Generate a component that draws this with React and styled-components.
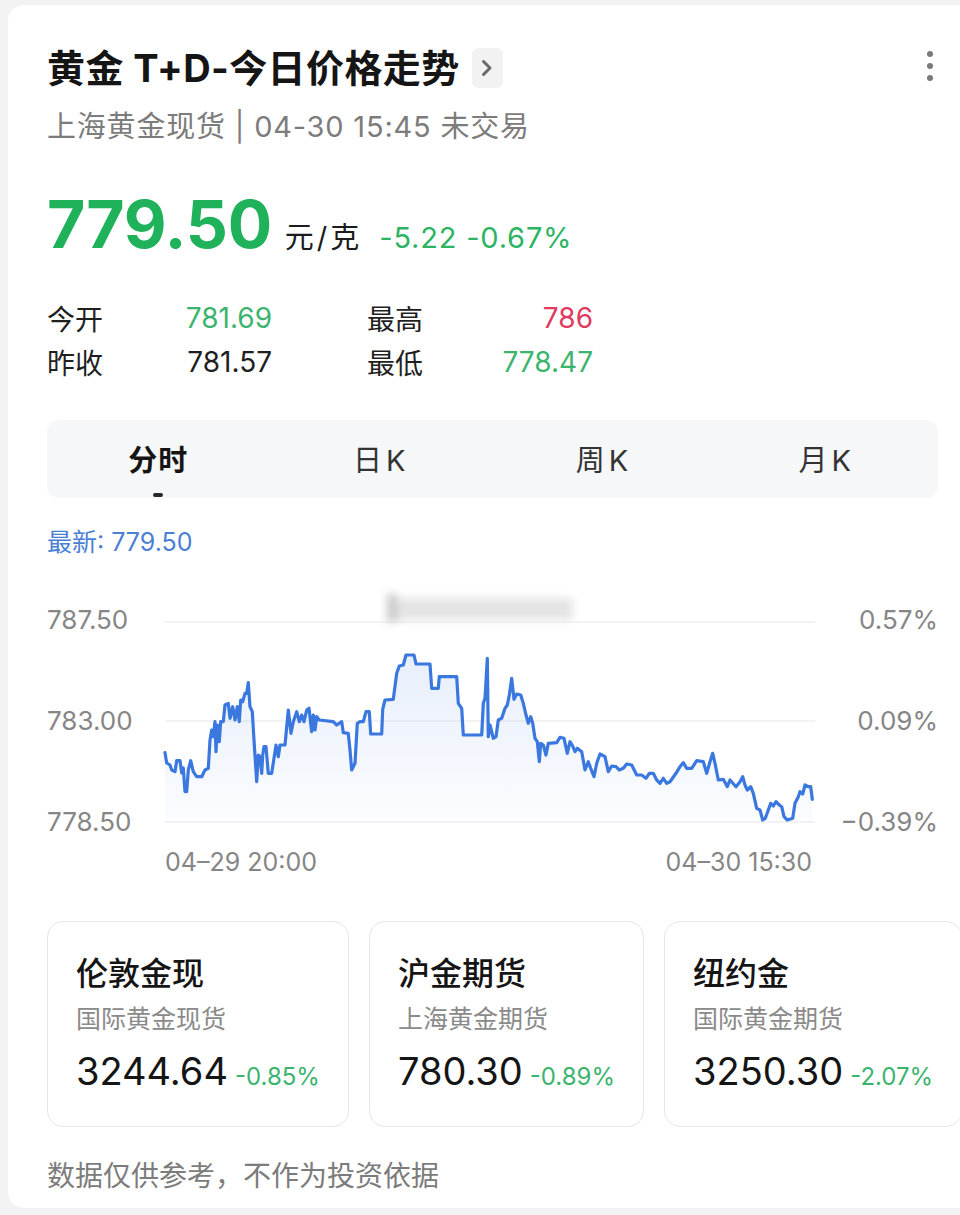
import React from "react";
import styled, { createGlobalStyle } from "styled-components";

const GlobalStyle = createGlobalStyle`
  html, body { margin: 0; padding: 0; }
  body {
    background: #f3f3f3;
    font-family: Inter, "Noto Sans CJK SC", sans-serif;
    color: #1a1a1a;
    overflow: hidden;
    width: 960px;
    height: 1215px;
  }
  * { box-sizing: border-box; }
`;

const Sheet = styled.div`
  margin: 5px -24px 0 8px;
  background: #ffffff;
  border-radius: 16px;
  padding: 41px 46px 14px 39px;
  height: 1203px;
`;

const Header = styled.div`
  display: flex;
  align-items: center;
  justify-content: space-between;
`;

const TitleGroup = styled.div`
  display: flex;
  align-items: center;
  gap: 12px;
`;

const Title = styled.h1`
  margin: 0;
  font-size: 38px;
  line-height: 44px;
  font-weight: 700;
  color: #151515;
  letter-spacing: 0.4px;
`;

const ChevronBox = styled.div`
  width: 31px;
  height: 40px;
  border-radius: 6px;
  background: #f2f2f2;
  display: flex;
  align-items: center;
  justify-content: center;
`;

const MoreDots = styled.div`
  display: flex;
  flex-direction: column;
  gap: 6px;
  margin-right: 5px;
  margin-top: -4px;
`;

const Dot = styled.span`
  width: 6px;
  height: 6px;
  border-radius: 50%;
  background: #7a7a7a;
`;

const Subtitle = styled.div`
  margin-top: 19px;
  font-size: 29px;
  line-height: 36px;
  color: #7c7c7c;
  letter-spacing: 0.8px;
`;

const PriceRow = styled.div`
  margin-top: 46px;
  display: flex;
  align-items: baseline;
`;

const BigPrice = styled.span`
  font-size: 66px;
  line-height: 66px;
  font-weight: 700;
  color: #20b25a;
  letter-spacing: -0.3px;
`;

const Unit = styled.span`
  margin-left: 13px;
  font-size: 29px;
  color: #1c1c1c;
  letter-spacing: 3px;
`;

const Change = styled.span`
  margin-left: 17px;
  font-size: 29px;
  color: #2cb463;
  letter-spacing: 0.8px;
`;

const StatGrid = styled.div`
  margin-top: 39px;
  display: grid;
  grid-template-columns: 225px 226px;
  column-gap: 95px;
  grid-auto-rows: 44px;
`;

const StatPair = styled.div`
  display: flex;
  align-items: center;
  justify-content: space-between;
  font-size: 28px;
`;

const StatLabel = styled.span`
  color: #1f1f1f;
`;

const StatValue = styled.span`
  color: ${(p) => p.$color || "#1f1f1f"};
`;

const TabBar = styled.div`
  margin-top: 36px;
  height: 78px;
  border-radius: 12px;
  background: #f6f7f8;
  display: grid;
  grid-template-columns: repeat(4, 1fr);
`;

const Tab = styled.div`
  display: flex;
  flex-direction: column;
  align-items: center;
  padding-top: 21px;
`;

const TabText = styled.span`
  font-size: 29px;
  line-height: 40px;
  font-weight: ${(p) => (p.$active ? 700 : 400)};
  color: ${(p) => (p.$active ? "#151515" : "#333333")};
  letter-spacing: ${(p) => (p.$active ? "1px" : "4px")};
`;

const TabIndicator = styled.span`
  margin-top: 12px;
  width: 10px;
  height: 4px;
  border-radius: 2px;
  background: ${(p) => (p.$active ? "#2a2a2a" : "transparent")};
`;

const Latest = styled.div`
  margin-top: 28px;
  font-size: 25px;
  line-height: 32px;
  color: #4a7fd4;
`;

const ChartGrid = styled.div`
  margin-top: 32px;
  display: grid;
  grid-template-columns: 118px 650px 1fr;
`;

const AxisColumn = styled.div`
  padding-top: 10px;
  height: 252px;
  display: flex;
  flex-direction: column;
  justify-content: space-between;
  align-items: ${(p) => (p.$right ? "flex-end" : "flex-start")};
`;

const AxisLabel = styled.span`
  font-size: 26px;
  line-height: 40px;
  color: #868686;
`;

const ChartSvg = styled.svg`
  display: block;
  width: 650px;
  height: 252px;
  overflow: visible;
`;

const TimeRow = styled.div`
  margin: 5px 0 0 118px;
  width: 647px;
  display: flex;
  justify-content: space-between;
  font-size: 25px;
  line-height: 30px;
  color: #868686;
`;

const CardRow = styled.div`
  margin-top: 44px;
  display: flex;
  gap: 20px;
  margin-right: -80px;
`;

const MarketCard = styled.div`
  flex: none;
  height: 206px;
  padding: 32px 28px 0 28px;
  border: 1.5px solid #e6e6e6;
  border-radius: 16px;
  background: #fff;
`;

const CardTitle = styled.div`
  font-size: 32px;
  line-height: 40px;
  font-weight: 500;
  color: #151515;
`;

const CardSub = styled.div`
  margin-top: 9px;
  font-size: 25px;
  line-height: 32px;
  color: #8a8a8a;
`;

const CardValueRow = styled.div`
  margin-top: 13px;
  display: flex;
  align-items: baseline;
  gap: 7px;
`;

const CardValue = styled.span`
  font-size: 38px;
  line-height: 46px;
  color: #151515;
`;

const CardChange = styled.span`
  font-size: 24px;
  color: #3cb46e;
`;

const Footer = styled.div`
  margin-top: 31px;
  font-size: 28px;
  line-height: 36px;
  color: #7c7c7c;
`;

const raw = [
  [165,752.7],[166.7,763],[170,765],[171.7,770],[175,771.7],[176.7,760.7],[180,760.7],[181.7,773],
  [183.3,768],[185,791.7],[186.7,791.7],[188.3,770],[190.7,760.7],[193.3,771.7],[196.7,776.7],
  [201.7,776.7],[205,770],[208.3,768.3],[210,740],[211.7,730],[213.3,736.7],[215,721.7],[216,751.7],
  [217.3,725],[219.3,741.7],[220.7,721.7],[223.3,721.7],[225,705],[228.3,703.3],[230,718.3],
  [232.7,706.7],[235,720],[237.3,706.7],[239.3,721.7],[240.7,700],[242.7,701.7],[245,693.3],
  [246.7,693.3],[248.3,682.7],[250,706.7],[252.3,711.7],[254,740],[256.7,781.7],[258.3,755],
  [260,756.7],[261.7,773.3],[262.7,755],[264,746.7],[266,746.7],[268.3,773.3],[271.7,773.3],
  [274,758.3],[276,745],[278.3,756.7],[280,745],[285,745],[288.3,710],[291,733.3],[293.3,721.7],
  [296.7,711.7],[299.3,721.7],[301.7,715],[304,721.7],[306.7,710],[309,708.3],[311.7,731.7],
  [313.3,715],[315,730],[316.7,716.7],[319.3,720],[333.3,721.7],[336.7,725],[341.7,721.7],
  [343.3,732.7],[348.3,733.3],[350,750],[351.7,770],[355,763.3],[357.3,723.3],[360,721.7],
  [363.3,721.7],[366,711.7],[369.3,711.7],[370.7,734],[381.7,734],[382.7,709.3],[385,700],
  [393.3,699.3],[396.7,673.3],[399.3,666],[403.3,665],[406,655],[414,655],[416,664],[430,664],
  [431.7,688.3],[438.3,688.3],[439.3,676.7],[456.7,676.7],[458.3,703.3],[461.7,708.3],[463.3,735],
  [481.7,735],[483.3,703.3],[485,698.3],[487.3,658.3],[488.3,736.7],[490,725],[493.3,738.3],
  [496,736.7],[498.3,720],[501.7,718.3],[505,708.3],[507.3,705],[509.3,695],[511.7,678.3],
  [514,699.3],[516.7,694],[520.7,695],[523.3,703.3],[526,715],[528.3,723.3],[530.7,716.7],
  [532.7,723.3],[535,738.3],[537.3,741.7],[539.3,761.7],[540.7,743.3],[543.3,745],[546,755],
  [548.3,743.3],[556.7,742.7],[560,737.3],[564,738.3],[567.3,753.3],[570,741.7],[572.7,746],
  [575,751.7],[577.3,748.3],[581.7,751.7],[585,770],[588.3,761.7],[590.7,768.3],[594,776.7],
  [596.7,763.3],[600,754],[605,756.7],[608.3,771.7],[611.7,766],[616,766.7],[619.3,770],
  [623.3,768.3],[626.7,764],[631.7,765],[636.7,775],[641.7,775],[646,778.3],[649.3,773.3],
  [653.3,773.3],[656.7,780],[660,783.3],[663.3,778.3],[666.7,783.3],[670,781.7],[676,773.3],
  [680,766.7],[683.3,762.7],[686.7,768.3],[691.7,768.3],[696.7,760.7],[703.3,761.7],[706.7,773.3],
  [710,761.7],[712.7,753.3],[715,763.3],[718.3,780],[723.3,779.3],[727.3,786.7],[730,780],
  [736,786.7],[740,781.7],[742.7,776.7],[745,785],[747.3,790],[750.7,786.7],[753.3,793.3],
  [756.7,808.3],[760,810],[762.7,820],[765.3,818.3],[768.3,810],[770.7,803.3],[773.3,806],
  [776,801.7],[779.3,805],[781.7,806.7],[784,816.7],[787.3,820],[792.7,818.3],[795,803.3],
  [798.3,796.7],[800,791.7],[802.7,794],[805,785],[808.3,786.7],[810.7,786.7],[812.3,799.3],
];

const OX = 165;
const OY = 590;
const pts = raw.map(([x, y]) => [+(x - OX).toFixed(1), +(y - OY).toFixed(1)]);
const linePath = "M" + pts.map((p) => p.join(" ")).join(" L");
const areaPath =
  linePath + ` L${pts[pts.length - 1][0]} 232 L${pts[0][0]} 232 Z`;

const gridYs = [32, 131, 232];

function PriceChart() {
  return (
    <ChartSvg viewBox="0 0 650 252">
      <defs>
        <linearGradient id="areaFill" x1="0" y1="0" x2="0" y2="1">
          <stop offset="0%" stopColor="#3b78e0" stopOpacity="0.12" />
          <stop offset="100%" stopColor="#3b78e0" stopOpacity="0.02" />
        </linearGradient>
        <filter id="blurMark" x="-20%" y="-50%" width="140%" height="200%">
          <feGaussianBlur stdDeviation="4" />
        </filter>
      </defs>
      {gridYs.map((y) => (
        <line key={y} x1="0" x2="650" y1={y} y2={y} stroke="#efefef" strokeWidth="1.5" />
      ))}
      <g filter="url(#blurMark)">
        <rect x="222" y="8" width="186" height="22" fill="#e4e4e4" />
        <rect x="222" y="4" width="10" height="28" fill="#c9c9c9" />
      </g>
      <path d={areaPath} fill="url(#areaFill)" />
      <path
        d={linePath}
        fill="none"
        stroke="#3a77df"
        strokeWidth="3.2"
        strokeLinejoin="round"
        strokeLinecap="round"
      />
    </ChartSvg>
  );
}

const cards = [
  { title: "伦敦金现", sub: "国际黄金现货", value: "3244.64", change: "-0.85%" },
  { title: "沪金期货", sub: "上海黄金期货", value: "780.30", change: "-0.89%" },
  { title: "纽约金", sub: "国际黄金期货", value: "3250.30", change: "-2.07%" },
];

const tabs = ["分时", "日K", "周K", "月K"];

export default function App() {
  return (
    <>
      <GlobalStyle />
      <Sheet>
        <Header>
          <TitleGroup>
            <Title>黄金 T+D-今日价格走势</Title>
            <ChevronBox>
              <svg width="12" height="18" viewBox="0 0 12 18">
                <path d="M2.5 2.5 L9 9 L2.5 15.5" fill="none" stroke="#6a6a6a" strokeWidth="3" strokeLinecap="round" strokeLinejoin="round" />
              </svg>
            </ChevronBox>
          </TitleGroup>
          <MoreDots>
            <Dot />
            <Dot />
            <Dot />
          </MoreDots>
        </Header>
        <Subtitle>上海黄金现货 | 04-30 15:45 未交易</Subtitle>
        <PriceRow>
          <BigPrice>779.50</BigPrice>
          <Unit>元/克</Unit>
          <Change>-5.22 -0.67%</Change>
        </PriceRow>
        <StatGrid>
          <StatPair>
            <StatLabel>今开</StatLabel>
            <StatValue $color="#3cb46e">781.69</StatValue>
          </StatPair>
          <StatPair>
            <StatLabel>最高</StatLabel>
            <StatValue $color="#e03a5e">786</StatValue>
          </StatPair>
          <StatPair>
            <StatLabel>昨收</StatLabel>
            <StatValue>781.57</StatValue>
          </StatPair>
          <StatPair>
            <StatLabel>最低</StatLabel>
            <StatValue $color="#3cb46e">778.47</StatValue>
          </StatPair>
        </StatGrid>
        <TabBar>
          {tabs.map((t, i) => (
            <Tab key={t}>
              <TabText $active={i === 0}>{t}</TabText>
              <TabIndicator $active={i === 0} />
            </Tab>
          ))}
        </TabBar>
        <Latest>最新: 779.50</Latest>
        <ChartGrid>
          <AxisColumn>
            <AxisLabel>787.50</AxisLabel>
            <AxisLabel>783.00</AxisLabel>
            <AxisLabel>778.50</AxisLabel>
          </AxisColumn>
          <PriceChart />
          <AxisColumn $right>
            <AxisLabel>0.57%</AxisLabel>
            <AxisLabel>0.09%</AxisLabel>
            <AxisLabel>−0.39%</AxisLabel>
          </AxisColumn>
        </ChartGrid>
        <TimeRow>
          <span>04–29 20:00</span>
          <span>04–30 15:30</span>
        </TimeRow>
        <CardRow>
          {cards.map((c) => (
            <MarketCard key={c.title}>
              <CardTitle>{c.title}</CardTitle>
              <CardSub>{c.sub}</CardSub>
              <CardValueRow>
                <CardValue>{c.value}</CardValue>
                <CardChange>{c.change}</CardChange>
              </CardValueRow>
            </MarketCard>
          ))}
        </CardRow>
        <Footer>数据仅供参考，不作为投资依据</Footer>
      </Sheet>
    </>
  );
}
